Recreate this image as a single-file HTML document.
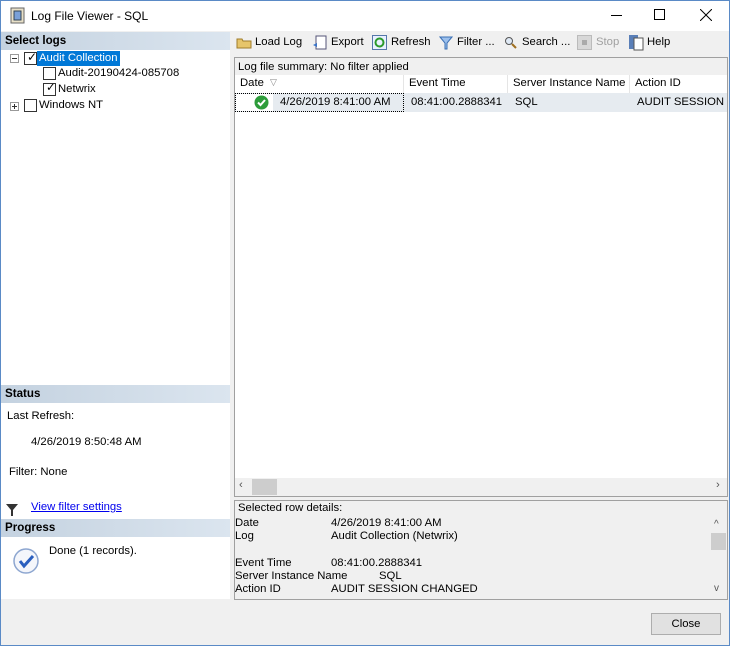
<!DOCTYPE html>
<html><head><meta charset="utf-8"><style>
*{box-sizing:border-box;margin:0;padding:0}
body{width:730px;height:646px;overflow:hidden;background:#f0f0f0;font-family:"Liberation Sans",sans-serif;font-size:11.3px;color:#000;position:relative}
.a{position:absolute;white-space:nowrap}
.hdr{position:absolute;left:1px;width:229px;height:18px;background:linear-gradient(90deg,#c4d2e0,#dbe5ef);font-weight:bold;padding:2px 4px;font-size:11.6px}
.cb{position:absolute;width:13px;height:13px;border:1px solid #333;background:#fff}
</style></head><body>
<div class="a" style="left:0;top:0;width:730px;height:646px;border:1px solid #5a8ac6"></div>
<div class="a" style="left:1px;top:1px;width:728px;height:30px;background:#fff"></div>
<svg class="a" style="left:9px;top:7px" width="17" height="17"><rect x="2" y="1" width="13" height="15" fill="#e8e0c8" stroke="#666"/><rect x="5" y="4" width="7" height="9" fill="#7aa0d8" stroke="#345"/></svg>
<div class="a" style="left:31px;top:9px;font-size:12px">Log File Viewer - SQL</div>
<div class="a" style="left:611px;top:15px;width:11px;height:1px;background:#000"></div>
<div class="a" style="left:654px;top:9px;width:11px;height:11px;border:1px solid #000"></div>
<svg class="a" style="left:700px;top:9px" width="12" height="12"><path d="M0 0L12 12M12 0L0 12" stroke="#000"/></svg>
<!-- left pane -->
<div class="a" style="left:1px;top:32px;width:229px;height:567px;background:#fff"></div>
<div class="hdr" style="top:32px">Select logs</div>
<div class="a" style="left:10px;top:54px;width:9px;height:9px;border:1px solid #999;background:#fff"></div><div class="a" style="left:12px;top:58px;width:5px;height:1px;background:#333"></div>
<div class="cb" style="left:24px;top:52px"></div><div class="a" style="left:27px;top:50px;font-size:12px">✓</div>
<div class="a" style="left:37px;top:51px;background:#0078d7;color:#fff;padding:1px 2px;height:15px">Audit Collection</div>
<div class="cb" style="left:43px;top:67px"></div>
<div class="a" style="left:58px;top:67px">Audit-20190424-085708</div>
<div class="cb" style="left:43px;top:83px"></div><div class="a" style="left:46px;top:81px">✓</div>
<div class="a" style="left:58px;top:83px">Netwrix</div>
<div class="a" style="left:10px;top:102px;width:9px;height:9px;border:1px solid #999;background:#fff"></div><div class="a" style="left:12px;top:106px;width:5px;height:1px;background:#333"></div><div class="a" style="left:14px;top:104px;width:1px;height:5px;background:#333"></div>
<div class="cb" style="left:24px;top:99px"></div>
<div class="a" style="left:39px;top:99px">Windows NT</div>
<div class="hdr" style="top:385px">Status</div>
<div class="a" style="left:7px;top:410px">Last Refresh:</div>
<div class="a" style="left:31px;top:436px">4/26/2019 8:50:48 AM</div>
<div class="a" style="left:9px;top:466px">Filter: None</div>
<svg class="a" style="left:5px;top:503px" width="14" height="14"><path d="M1 1H13L8 7V13H6V7Z" fill="#333"/></svg>
<div class="a" style="left:31px;top:501px;color:#00e;text-decoration:underline">View filter settings</div>
<div class="hdr" style="top:519px">Progress</div>
<svg class="a" style="left:12px;top:547px" width="28" height="28"><circle cx="14" cy="14" r="12" fill="#f4f6fb" stroke="#8da6d0" stroke-width="1.5"/><path d="M8 14L12 19L21 9" stroke="#2a5fbf" stroke-width="3" fill="none"/></svg>
<div class="a" style="left:49px;top:545px">Done (1 records).</div>
<div class="a" style="left:230px;top:32px;width:3px;height:567px;background:#f0f0f0"></div>
<!-- toolbar -->
<svg class="a" style="left:236px;top:36px" width="18" height="14"><path d="M1 3H6L7 5H15V12H1Z" fill="#e7c56a" stroke="#a07d2a"/></svg>
<div class="a" style="left:255px;top:36px">Load Log</div>
<svg class="a" style="left:312px;top:35px" width="15" height="16"><rect x="4" y="1" width="10" height="13" fill="#fff" stroke="#557"/><path d="M1 10L5 8V12Z" fill="#3a74c8"/></svg>
<div class="a" style="left:331px;top:36px">Export</div>
<svg class="a" style="left:372px;top:35px" width="15" height="15"><rect x="0.5" y="0.5" width="14" height="14" fill="#e8f1ff" stroke="#5677aa"/><circle cx="7.5" cy="7.5" r="4" fill="none" stroke="#2c9a2c" stroke-width="2"/></svg>
<div class="a" style="left:391px;top:36px">Refresh</div>
<svg class="a" style="left:439px;top:36px" width="14" height="14"><path d="M1 1H13L8 7V13H6V7Z" fill="#9cc0ec" stroke="#3a6fb5"/></svg>
<div class="a" style="left:457px;top:36px">Filter ...</div>
<svg class="a" style="left:504px;top:36px" width="14" height="14"><circle cx="5" cy="5" r="3.5" fill="#dfe9f5" stroke="#555"/><path d="M8 8L12 12" stroke="#a07020" stroke-width="2"/></svg>
<div class="a" style="left:522px;top:36px">Search ...</div>
<div class="a" style="left:577px;top:35px;width:15px;height:15px;background:#d8d8d8;border:1px solid #bbb"></div><div class="a" style="left:582px;top:40px;width:5px;height:5px;background:#aaa"></div>
<div class="a" style="left:596px;top:36px;color:#a0a0a0">Stop</div>
<svg class="a" style="left:628px;top:34px" width="16" height="17"><rect x="1" y="1" width="9" height="14" fill="#5a7fb8"/><rect x="6" y="4" width="9" height="12" fill="#fff" stroke="#555"/></svg>
<div class="a" style="left:647px;top:36px">Help</div>
<!-- grid -->
<div class="a" style="left:234px;top:57px;width:494px;height:440px;border:1px solid #a0a0a0;background:#fff"></div>
<div class="a" style="left:235px;top:58px;width:492px;height:17px;background:#f0f0f0"></div>
<div class="a" style="left:238px;top:61px">Log file summary: No filter applied</div>
<div class="a" style="left:235px;top:75px;width:492px;height:18px;background:#fff"></div>
<div class="a" style="left:403px;top:75px;width:1px;height:18px;background:#e5e5e5"></div>
<div class="a" style="left:507px;top:75px;width:1px;height:18px;background:#e5e5e5"></div>
<div class="a" style="left:629px;top:75px;width:1px;height:18px;background:#e5e5e5"></div>
<div class="a" style="left:240px;top:77px">Date</div>
<div class="a" style="left:270px;top:77px;color:#888;font-size:9px">▽</div>
<div class="a" style="left:409px;top:77px">Event Time</div>
<div class="a" style="left:513px;top:77px">Server Instance Name</div>
<div class="a" style="left:635px;top:77px">Action ID</div>
<div class="a" style="left:235px;top:93px;width:492px;height:19px;background:#e6ebf0"></div>
<div class="a" style="left:235px;top:93px;width:169px;height:19px;border:1px dotted #000"></div>
<div class="a" style="left:236px;top:94px;width:37px;height:17px;background:#fff"></div>
<svg class="a" style="left:254px;top:95px" width="15" height="15"><circle cx="7.5" cy="7.5" r="7" fill="#2d9c3a"/><path d="M4 7.5L6.5 10L11 5" stroke="#fff" stroke-width="2" fill="none"/></svg>
<div class="a" style="left:280px;top:96px">4/26/2019 8:41:00 AM</div>
<div class="a" style="left:411px;top:96px">08:41:00.2888341</div>
<div class="a" style="left:515px;top:96px">SQL</div>
<div class="a" style="left:637px;top:96px;width:90px;overflow:hidden">AUDIT SESSION CHANGED</div>
<div class="a" style="left:235px;top:478px;width:492px;height:18px;background:#f0f0f0"></div>
<div class="a" style="left:252px;top:479px;width:25px;height:16px;background:#cdcdcd"></div>
<div class="a" style="left:239px;top:479px;color:#555">‹</div>
<div class="a" style="left:716px;top:479px;color:#555">›</div>
<!-- details -->
<div class="a" style="left:234px;top:500px;width:494px;height:100px;border:1px solid #a0a0a0;background:#f0f0f0"></div>
<div class="a" style="left:238px;top:502px">Selected row details:</div>
<div class="a" style="left:235px;top:517px">Date</div><div class="a" style="left:331px;top:517px">4/26/2019 8:41:00 AM</div>
<div class="a" style="left:235px;top:530px">Log</div><div class="a" style="left:331px;top:530px">Audit Collection (Netwrix)</div>
<div class="a" style="left:235px;top:557px">Event Time</div><div class="a" style="left:331px;top:557px">08:41:00.2888341</div>
<div class="a" style="left:235px;top:570px">Server Instance Name</div><div class="a" style="left:379px;top:570px">SQL</div>
<div class="a" style="left:235px;top:583px">Action ID</div><div class="a" style="left:331px;top:583px">AUDIT SESSION CHANGED</div>
<div class="a" style="left:711px;top:533px;width:15px;height:17px;background:#cdcdcd"></div>
<div class="a" style="left:714px;top:519px;color:#555;font-size:10px">^</div>
<div class="a" style="left:714px;top:583px;color:#555;font-size:10px">v</div>
<div class="a" style="left:651px;top:613px;width:70px;height:22px;border:1px solid #adadad;background:#e1e1e1;text-align:center;line-height:20px">Close</div>
</body></html>
